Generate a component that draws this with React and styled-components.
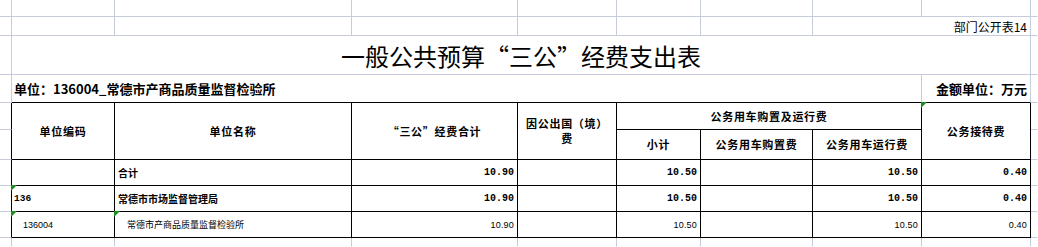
import React from "react";
import styled, { createGlobalStyle } from "styled-components";

const GRID = "#c6ccdc";
const INK = "#000000";
const FLAG = "#1e8c1e";

const lineColor = (v) => (v === "k" ? INK : v === "g" ? GRID : "transparent");

const Global = createGlobalStyle`
  html, body {
    margin: 0;
    padding: 0;
    background: #ffffff;
  }
  body {
    font-family: "Noto Sans CJK SC", "Noto Sans", sans-serif;
    color: #000;
  }
`;

const Sheet = styled.div`
  display: grid;
  width: 1038px;
  height: 247px;
  overflow: hidden;
  grid-template-columns: 12px 103px 237px 166px 99px 84px 112px 109px 109px 1fr;
  grid-template-rows: 17px 19px 39px 28px 27px 30px 26px 26px 26px 1fr;
`;

const Cell = styled.div`
  position: relative;
  box-sizing: border-box;
  display: flex;
  align-items: center;
  justify-content: ${(p) =>
    p.$align === "right" ? "flex-end" : p.$align === "center" ? "center" : "flex-start"};
  text-align: ${(p) => p.$align || "left"};
  padding: 0 ${(p) => (p.$align === "right" ? 3 : 0)}px 0 ${(p) => p.$indent || 0}px;
  grid-column: span ${(p) => p.$span || 1};
  grid-row: span ${(p) => p.$rows || 1};
  border-right: 1px solid ${(p) => lineColor(p.$r || "g")};
  border-bottom: 1px solid ${(p) => lineColor(p.$b || "g")};
  white-space: nowrap;
  min-width: 0;

  ${(p) =>
    p.$flag &&
    `
    &::before {
      content: "";
      position: absolute;
      top: -1px;
      left: -1px;
      border-top: 6px solid ${FLAG};
      border-right: 6px solid transparent;
    }
  `}
`;

const Title = styled.span`
  font-size: 24px;
  font-weight: 400;
`;

const Note = styled.span`
  font-size: 12px;
  font-weight: 400;
`;

const Label = styled.span`
  font-size: 13px;
  font-weight: 700;
`;

const Head = styled.span`
  font-size: 11px;
  font-weight: 700;
  letter-spacing: 0.7px;
  line-height: 15px;
`;

const Name = styled.span`
  font-size: ${(p) => (p.$bold ? 10 : 9)}px;
  font-weight: ${(p) => (p.$bold ? 700 : 400)};
`;

const Num = styled.span`
  font-family: ${(p) =>
    p.$bold ? `"Liberation Mono", "DejaVu Sans Mono", monospace` : `"Liberation Sans", Arial, sans-serif`};
  font-size: ${(p) => (p.$bold ? 10 : 9)}px;
  font-weight: ${(p) => (p.$bold ? 700 : 400)};
  letter-spacing: ${(p) => (p.$bold ? 0 : 0.2)}px;
`;

const Code = styled.span`
  font-family: ${(p) =>
    p.$bold ? `"Liberation Mono", "DejaVu Sans Mono", monospace` : `"Liberation Sans", Arial, sans-serif`};
  font-size: ${(p) => (p.$bold ? 9.5 : 9)}px;
  font-weight: ${(p) => (p.$bold ? 700 : 400)};
`;

const rows = [
  { code: "", name: "合计", total: "10.90", abroad: "", sub: "10.50", buy: "", run: "10.50", host: "0.40", bold: true },
  { code: "136", name: "常德市市场监督管理局", total: "10.90", abroad: "", sub: "10.50", buy: "", run: "10.50", host: "0.40", bold: true, flag: true },
  { code: "136004", name: "常德市产商品质量监督检验所", total: "10.90", abroad: "", sub: "10.50", buy: "", run: "10.50", host: "0.40", bold: false, flag: true, nameFlag: true },
];

function Blank({ count, ...rest }) {
  return Array.from({ length: count }, (_, i) => <Cell key={i} {...rest} />);
}

export default function App() {
  return (
    <>
      <Global />
      <Sheet>
        {/* row 1 */}
        <Blank count={9} />
        <Cell $r="n" />

        {/* row 2 */}
        <Blank count={7} />
        <Cell $span={2} $align="right">
          <Note>部门公开表14</Note>
        </Cell>
        <Cell $r="n" />

        {/* title */}
        <Cell />
        <Cell $span={8} $align="center">
          <Title>一般公共预算“三公”经费支出表</Title>
        </Cell>
        <Cell $r="n" />

        {/* unit line */}
        <Cell />
        <Cell $span={7} $b="k" $indent={2}>
          <Label>单位：136004_常德市产商品质量监督检验所</Label>
        </Cell>
        <Cell $b="k" $align="right">
          <Label>金额单位：万元</Label>
        </Cell>
        <Cell $r="n" />

        {/* header */}
        <Cell $r="k" />
        <Cell $rows={2} $r="k" $b="k" $align="center"><Head>单位编码</Head></Cell>
        <Cell $rows={2} $r="k" $b="k" $align="center"><Head>单位名称</Head></Cell>
        <Cell $rows={2} $r="k" $b="k" $align="center"><Head>“三公”经费合计</Head></Cell>
        <Cell $rows={2} $r="k" $b="k" $align="center">
          <Head>因公出国（境）<br />费</Head>
        </Cell>
        <Cell $span={3} $r="k" $b="k" $align="center"><Head>公务用车购置及运行费</Head></Cell>
        <Cell $rows={2} $r="k" $b="k" $align="center" $flag><Head>公务接待费</Head></Cell>
        <Cell $r="n" />

        <Cell $r="k" />
        <Cell $r="k" $b="k" $align="center"><Head>小计</Head></Cell>
        <Cell $r="k" $b="k" $align="center"><Head>公务用车购置费</Head></Cell>
        <Cell $r="k" $b="k" $align="center"><Head>公务用车运行费</Head></Cell>
        <Cell $r="n" />

        {/* data */}
        {rows.map((row, i) => (
          <React.Fragment key={i}>
            <Cell $r="k" />
            <Cell $r="k" $b="k" $indent={row.bold ? 2 : 11} $flag={row.flag}>
              <Code $bold={row.bold}>{row.code}</Code>
            </Cell>
            <Cell $r="k" $b="k" $indent={row.bold ? 3 : 12} $flag={row.nameFlag}>
              <Name $bold={row.bold}>{row.name}</Name>
            </Cell>
            <Cell $r="k" $b="k" $align="right"><Num $bold={row.bold}>{row.total}</Num></Cell>
            <Cell $r="k" $b="k" $align="right"><Num $bold={row.bold}>{row.abroad}</Num></Cell>
            <Cell $r="k" $b="k" $align="right"><Num $bold={row.bold}>{row.sub}</Num></Cell>
            <Cell $r="k" $b="k" $align="right"><Num $bold={row.bold}>{row.buy}</Num></Cell>
            <Cell $r="k" $b="k" $align="right"><Num $bold={row.bold}>{row.run}</Num></Cell>
            <Cell $r="k" $b="k" $align="right"><Num $bold={row.bold}>{row.host}</Num></Cell>
            <Cell $r="n" />
          </React.Fragment>
        ))}

        {/* trailing row */}
        <Blank count={9} $b="n" />
        <Cell $r="n" $b="n" />
      </Sheet>
    </>
  );
}
